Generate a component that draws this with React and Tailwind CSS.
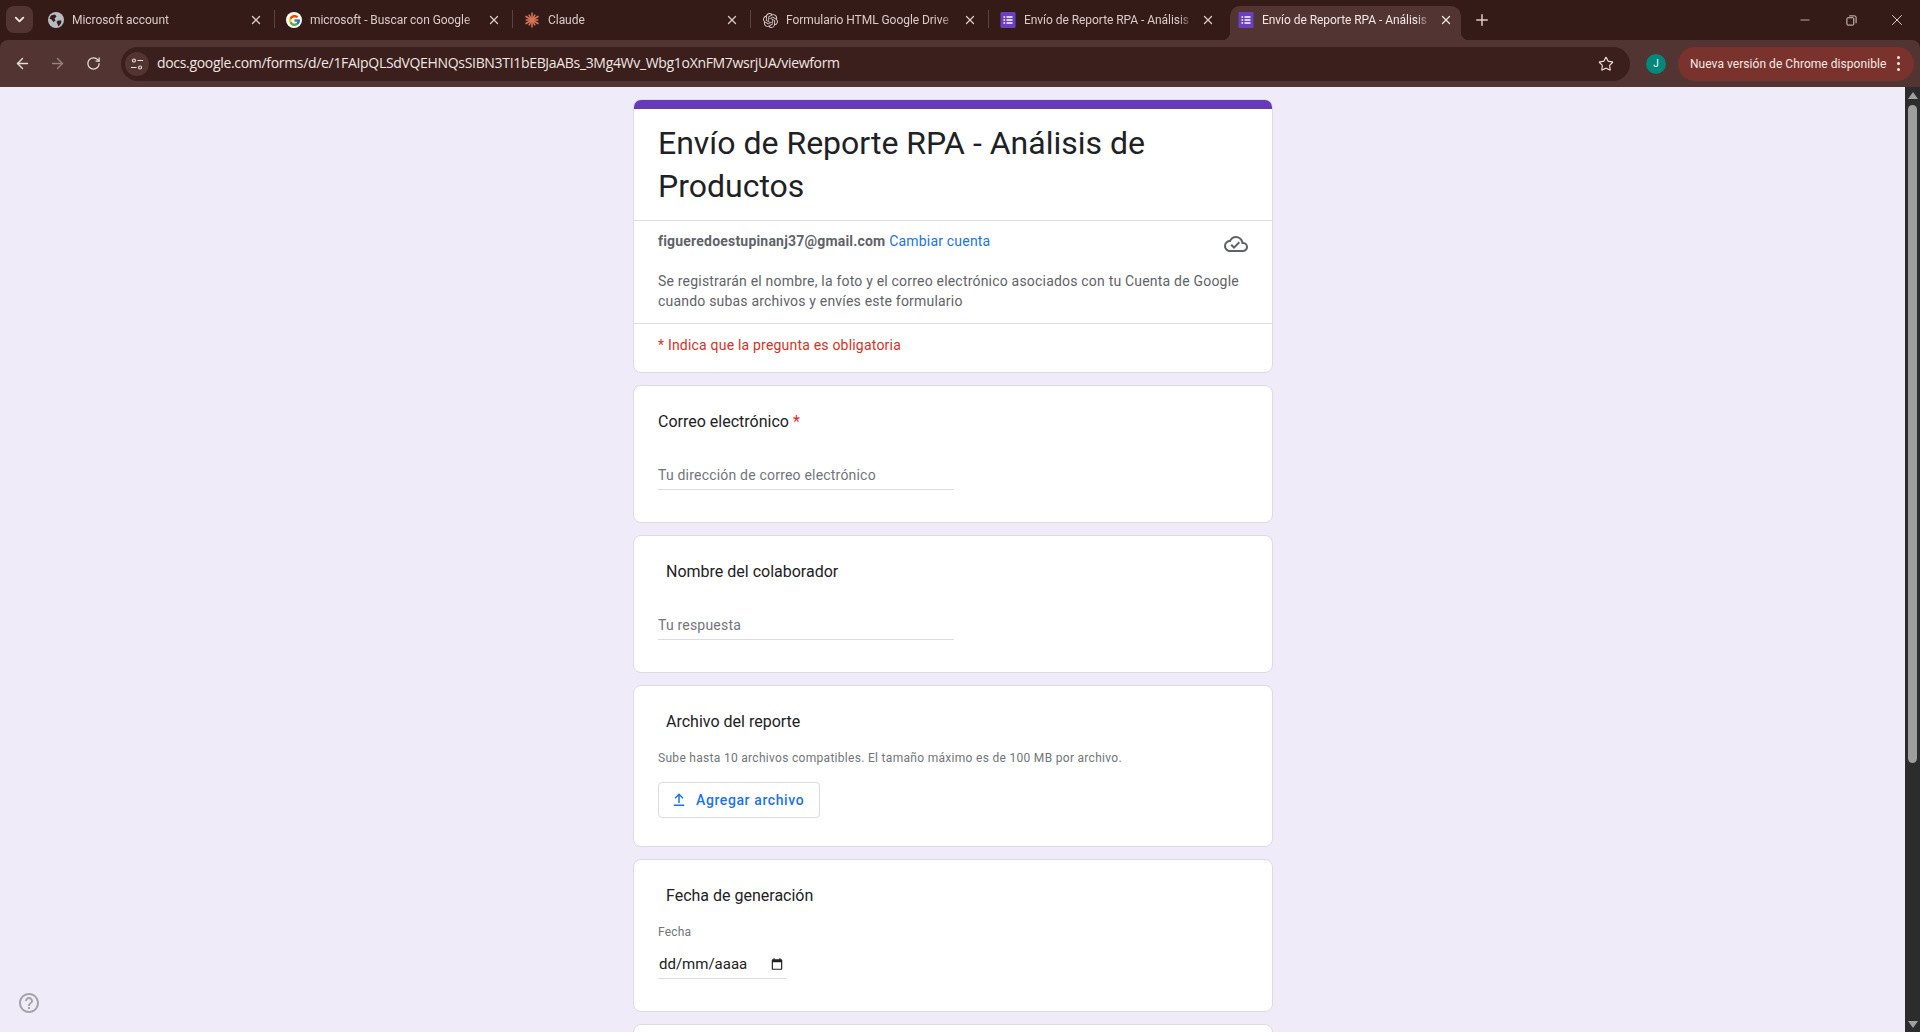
import { ArrowLeft, ArrowRight, RotateCw, Star, X, Plus, ChevronDown, Minus } from "lucide-react";
import { FcGoogle } from "react-icons/fc";
import { SiOpenai } from "react-icons/si";

function Globe() {
  return (
    <svg viewBox="0 0 16 16" className="h-4 w-4">
      <circle cx="8" cy="8" r="8" fill="#b7bcc2" />
      <path d="M3 3.5 7 2.5 8.5 4.5 6.5 6.5 7.5 8.5 5.5 10 3.5 7.5 1.5 6.5ZM10 8.5h3.5L13 11.5l-2.5 3-1-2.5-1-2Z" fill="#341b18" />
    </svg>
  );
}

function ClaudeMark() {
  const rays = [0, 30, 60, 90, 120, 150, 180, 210, 240, 270, 300, 330];
  return (
    <svg viewBox="0 0 16 16" className="h-4 w-4">
      {rays.map((deg) => (
        <line key={deg} x1="8" y1="8" x2="8" y2={deg % 60 === 0 ? 0.5 : 1.8} stroke="#d97757" strokeWidth="1.5" transform={`rotate(${deg} 8 8)`} />
      ))}
    </svg>
  );
}

function FormsMark() {
  return (
    <svg viewBox="0 0 16 16" className="h-4 w-4">
      <rect width="15" height="16" x="0.5" rx="1" fill="#6a3fc0" />
      <path d="M3.5 4.2h1.6v1.6H3.5zM6.5 4.3h6v1.4h-6zM3.5 7.2h1.6v1.6H3.5zM6.5 7.3h6v1.4h-6zM3.5 10.2h1.6v1.6H3.5zM6.5 10.3h6v1.4h-6z" fill="#fff" />
    </svg>
  );
}

const tabs = [
  { title: "Microsoft account", icon: <Globe /> },
  { title: "microsoft - Buscar con Google", icon: <span className="flex h-4 w-4 items-center justify-center rounded-full bg-white"><FcGoogle size={13} /></span> },
  { title: "Claude", icon: <ClaudeMark /> },
  { title: "Formulario HTML Google Drive", icon: <SiOpenai size={15} color="#d5c8c5" /> },
  { title: "Envío de Reporte RPA - Análisis de Productos", icon: <FormsMark /> },
  { title: "Envío de Reporte RPA - Análisis de Productos", icon: <FormsMark />, active: true },
];

function Tab({ tab, separator }) {
  return (
    <div className={`relative flex h-[34px] w-[238px] shrink-0 items-center pb-[6px] pl-[12px] pr-[11px] ${tab.active ? "z-10" : ""}`}>
      {tab.active && (
        <>
          <div className="absolute inset-y-0 left-[4px] right-[3px] rounded-t-[10px] bg-[#523432]" />
          <div className="absolute bottom-0 left-[-4px] h-[8px] w-[8px] bg-[radial-gradient(circle_at_0_0,transparent_8px,#523432_8.5px)]" />
          <div className="absolute bottom-0 right-[-5px] h-[8px] w-[8px] bg-[radial-gradient(circle_at_100%_0,transparent_8px,#523432_8.5px)]" />
        </>
      )}
      <span className="relative flex w-4 shrink-0 items-center justify-center">{tab.icon}</span>
      <span className={`relative ml-2 min-w-0 flex-1 overflow-hidden whitespace-nowrap text-[12px] tracking-[-0.05px] [mask-image:linear-gradient(to_left,transparent,black_14px)] ${tab.active ? "text-[#f2e6e3]" : "text-[#dcccc8]"}`}>
        {tab.title}
      </span>
      <X className={`relative ml-[8px] shrink-0 ${tab.active ? "text-[#f2e6e3]" : "text-[#dcccc8]"}`} size={14} strokeWidth={2.25} />
      {separator && <span className="absolute right-[-1px] top-[4px] h-[18px] w-px bg-[#5d4340]" />}
    </div>
  );
}

function ChromeBar() {
  return (
    <header className="shrink-0 bg-[#341b18] font-['Roboto',sans-serif]">
      <div className="flex h-[40px] items-start pt-[6px]">
        <div className="ml-[6px] flex h-[27px] w-[27px] shrink-0 items-center justify-center rounded-lg bg-[#523432] text-[#f2e6e3]">
          <ChevronDown size={15} strokeWidth={3} />
        </div>
        <div className="ml-[3px] flex">
          {tabs.map((tab, i) => (
            <Tab key={i} tab={tab} separator={i < 4} />
          ))}
        </div>
        <Plus className="ml-[9px] mt-[5px] shrink-0 text-[#dcccc8]" size={18} strokeWidth={2} />
        <div className="ml-auto flex h-[28px] items-center text-[#e8dcd9]">
          <span className="flex w-[46px] justify-center"><Minus size={14} strokeWidth={1.25} /></span>
          <span className="flex w-[46px] justify-center">
            <svg viewBox="0 0 12 12" className="h-[11px] w-[11px]" fill="none" stroke="currentColor">
              <rect x="1" y="3" width="7.5" height="8" rx="1" />
              <path d="M3.5 1h6a1.5 1.5 0 0 1 1.5 1.5V9" />
            </svg>
          </span>
          <span className="flex w-[46px] justify-center"><X size={18} strokeWidth={1.25} /></span>
        </div>
      </div>
      <div className="flex h-[47px] items-center rounded-t-lg bg-[#523432]">
        <ArrowLeft className="ml-[14px] text-[#e8dcd9]" size={17} strokeWidth={2} />
        <ArrowRight className="ml-[18px] text-[#94807d]" size={17} strokeWidth={2} />
        <RotateCw className="ml-[20px] text-[#e8dcd9]" size={15} strokeWidth={2} />
        <div className="ml-[20px] flex h-[34px] w-[1509px] shrink-0 items-center rounded-full bg-[#3a1f1c] pl-[4px] pr-[16px]">
          <span className="flex h-[24px] w-[24px] shrink-0 items-center justify-center rounded-full bg-[#523432]">
            <svg viewBox="0 0 16 16" className="h-[14px] w-[14px]" fill="none" stroke="#e8dcd9" strokeWidth="1.3">
              <circle cx="4.5" cy="4" r="1.7" />
              <path d="M8.5 4H15M1 12h6.5" />
              <circle cx="11.5" cy="12" r="1.7" />
            </svg>
          </span>
          <span className="ml-[8px] flex-1 whitespace-nowrap pb-[2px] font-['Open_Sans',sans-serif] text-[14px] tracking-[-0.32px] text-[#f2e6e3]">
            docs.google.com/forms/d/e/1FAIpQLSdVQEHNQsSIBN3TI1bEBJaABs_3Mg4Wv_Wbg1oXnFM7wsrjUA/viewform
          </span>
          <Star className="text-[#e8dcd9]" size={16} strokeWidth={1.75} />
        </div>
        <span className="ml-[16px] flex h-[20px] w-[20px] shrink-0 items-center justify-center rounded-full bg-[#00897b] text-[10px] text-white">J</span>
        <div className="ml-[12px] flex h-[34px] w-[236px] shrink-0 items-center rounded-full bg-[#7a322c] pl-[12px] text-[12px] tracking-[0.05px] text-[#f7e9e6]">
          <span className="w-[196px] whitespace-nowrap">Nueva versión de Chrome disponible</span>
          <span className="ml-[11px] flex flex-col gap-[3px]">
            <i className="h-[3px] w-[3px] rounded-full bg-[#f7e9e6]" />
            <i className="h-[3px] w-[3px] rounded-full bg-[#f7e9e6]" />
            <i className="h-[3px] w-[3px] rounded-full bg-[#f7e9e6]" />
          </span>
        </div>
      </div>
    </header>
  );
}

function Card({ className = "", children }) {
  return <section className={`rounded-lg border border-[#dadce0] bg-white px-6 ${className}`}>{children}</section>;
}

function TextQuestion({ title, placeholder, required }) {
  return (
    <Card className="mt-[12px] h-[138px] shrink-0 pt-[25px]">
      <h2 className={`text-[16px] leading-[22px] text-[#202124] ${required ? "" : "pl-2"}`}>
        {title}
        {required && <span className="text-[#d93025]"> *</span>}
      </h2>
      <div className="mt-[32px] w-[296px] border-b border-[#dadce0] pb-[4px] text-[14px] leading-[20px] tracking-[0.2px] text-[#70757a]">
        {placeholder}
      </div>
    </Card>
  );
}

function Form() {
  return (
    <div className="mx-auto w-[640px] shrink-0 pt-[12px]">
      <section className="overflow-hidden rounded-lg border border-[#dadce0] bg-white">
        <div className="-mx-px -mt-px h-[10px] bg-[#673ab7]" />
        <h1 className="border-b border-[#dadce0] px-6 pb-[12px] pt-[13px] text-[32px] leading-[43px] text-[#202124]">
          Envío de Reporte RPA - Análisis de Productos
        </h1>
        <div className="border-b border-[#dadce0] px-6 pb-[12px] pt-[10px] text-[14px] leading-[20px] tracking-[0.2px] text-[#5f6368]">
          <div className="flex items-start justify-between">
            <p>
              <b className="font-bold">figueredoestupinanj37@gmail.com</b> <span className="text-[#1a73e8]">Cambiar cuenta</span>
            </p>
            <svg viewBox="0 0 24 24" className="mt-[1px] h-[24px] w-[24px]" fill="#5f6368">
              <path d="M19.35 10.04A7.49 7.49 0 0 0 12 4C9.11 4 6.6 5.64 5.35 8.04A5.994 5.994 0 0 0 0 14c0 3.31 2.69 6 6 6h13c2.76 0 5-2.24 5-5 0-2.64-2.05-4.78-4.65-4.96zM19 18H6c-2.21 0-4-1.79-4-4 0-2.05 1.53-3.76 3.56-3.97l1.07-.11.5-.95A5.469 5.469 0 0 1 12 6c2.62 0 4.88 1.86 5.39 4.43l.3 1.5 1.53.11A2.98 2.98 0 0 1 22 15c0 1.65-1.35 3-3 3zm-9-3.82-2.09-2.09L6.5 13.5 10 17l6.01-6.01-1.41-1.41z" />
            </svg>
          </div>
          <p className="mt-[15px]">
            Se registrarán el nombre, la foto y el correo electrónico asociados con tu Cuenta de Google cuando subas archivos y envíes este formulario
          </p>
        </div>
        <p className="px-6 pb-[17px] pt-[11px] text-[14px] leading-[20px] tracking-[0.2px] text-[#d93025]">* Indica que la pregunta es obligatoria</p>
      </section>

      <TextQuestion title="Correo electrónico" placeholder="Tu dirección de correo electrónico" required />
      <TextQuestion title="Nombre del colaborador" placeholder="Tu respuesta" />

      <Card className="mt-[12px] h-[162px] pt-[25px]">
        <h2 className="pl-2 text-[16px] leading-[22px] text-[#202124]">Archivo del reporte</h2>
        <p className="mt-[17px] text-[12px] leading-[16px] tracking-[0.3px] text-[#70757a]">
          Sube hasta 10 archivos compatibles. El tamaño máximo es de 100 MB por archivo.
        </p>
        <div className="mt-[16px] flex h-[36px] w-[162px] items-center rounded border border-[#dadce0] pl-[11px] text-[14px] font-medium tracking-[0.6px] text-[#1a73e8]">
          <svg viewBox="0 0 24 24" className="h-[18px] w-[18px]" fill="currentColor">
            <path d="M5 20h14v-2H5v2zM12 3 6 9l1.4 1.4L11 6.8V16h2V6.8l3.6 3.6L18 9l-6-6z" />
          </svg>
          <span className="ml-[8px]">Agregar archivo</span>
        </div>
      </Card>

      <Card className="mt-[12px] h-[153px] pt-[25px]">
        <h2 className="pl-2 text-[16px] leading-[22px] text-[#202124]">Fecha de generación</h2>
        <p className="mt-[17px] text-[12px] leading-[16px] tracking-[0.2px] text-[#70757a]">Fecha</p>
        <div className="mt-[12px] flex w-[128px] items-center border-b border-[#dadce0] pb-[2px] pl-px text-[15px] leading-[24px] text-[#202124]">
          <span>dd/mm/aaaa</span>
          <svg viewBox="0 0 24 24" className="ml-auto mr-[2px] h-[14px] w-[14px]" fill="#202124">
            <path d="M19 4h-1V2h-2v2H8V2H6v2H5a2 2 0 0 0-2 2v14a2 2 0 0 0 2 2h14a2 2 0 0 0 2-2V6a2 2 0 0 0-2-2zm0 16H5V9h14v11z" />
          </svg>
        </div>
      </Card>

      <Card className="mt-[12px] h-[40px]" />
    </div>
  );
}

function Scrollbar() {
  return (
    <div className="flex w-[15px] shrink-0 flex-col items-center bg-[#2c2c2c] pt-[5px]">
      <i className="h-0 w-0 border-x-[5px] border-b-[7px] border-x-transparent border-b-[#a0a0a0]" />
      <div className="mt-[6px] h-[658px] w-[9px] rounded-full bg-[#9e9e9e]" />
      <i className="mb-[4px] mt-auto h-0 w-0 border-x-[5px] border-t-[7px] border-x-transparent border-t-[#a0a0a0]" />
    </div>
  );
}

export default function App() {
  return (
    <div className="flex h-screen flex-col overflow-hidden bg-[#f0ebf8] font-['Roboto',sans-serif]">
      <ChromeBar />
      <main className="relative flex min-h-0 flex-1">
        <div className="flex min-w-0 flex-1 justify-center overflow-hidden pl-px">
          <Form />
        </div>
        <Scrollbar />
        <svg viewBox="0 0 24 24" className="absolute bottom-[17px] left-[17px] h-[24px] w-[24px]" fill="#a4a4a8">
          <path d="M11 18h2v-2h-2v2zm1-16C6.48 2 2 6.48 2 12s4.48 10 10 10 10-4.48 10-10S17.52 2 12 2zm0 18c-4.41 0-8-3.59-8-8s3.59-8 8-8 8 3.59 8 8-3.59 8-8 8zm0-14c-2.21 0-4 1.79-4 4h2c0-1.1.9-2 2-2s2 .9 2 2c0 2-3 1.75-3 5h2c0-2.25 3-2.5 3-5 0-2.21-1.79-4-4-4z" />
        </svg>
      </main>
    </div>
  );
}
